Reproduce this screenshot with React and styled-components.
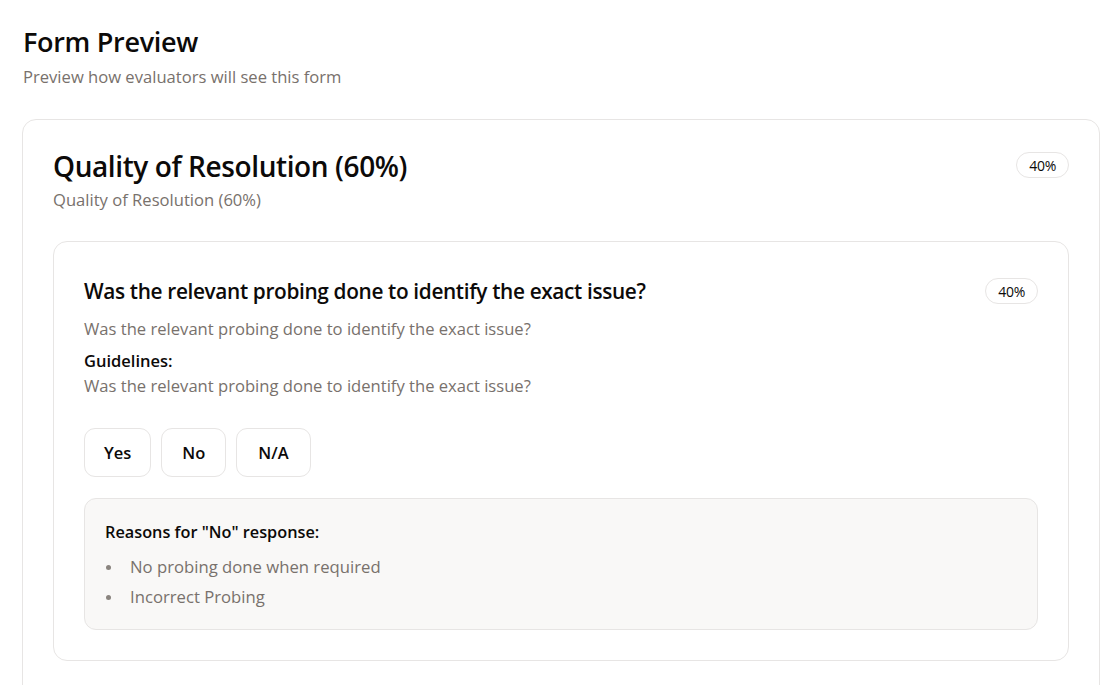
import React from "react";
import styled, { createGlobalStyle } from "styled-components";

const Global = createGlobalStyle`
  html, body { margin: 0; padding: 0; background: #ffffff; }
  body { font-family: "Open Sans", "Noto Sans", sans-serif; color: #0c0a09; }
  * { box-sizing: border-box; }
`;

const Page = styled.div`
  padding: 24px 10px 0 22px;
  height: 685px;
  overflow: hidden;
`;

const Header = styled.header`
  margin-bottom: 30px;
  padding-left: 1px;
`;

const PageTitle = styled.h1`
  margin: 0;
  font-size: 27px;
  font-weight: 600;
  line-height: 36px;
  letter-spacing: -0.3px;
`;

const Muted = styled.p`
  margin: ${(p) => p.$mt || 0}px 0 0;
  font-size: ${(p) => p.$size || 16.6}px;
  line-height: ${(p) => p.$lh || 24}px;
  color: #78716c;
`;

const Card = styled.section`
  border: 1px solid #e7e5e4;
  border-radius: 14px;
  padding: ${(p) => p.$pad || "30px"};
  margin-top: ${(p) => p.$mt || 0}px;
  background: #fff;
  ${(p) => p.$outer && "min-height: 700px;"}
`;

const HeadRow = styled.div`
  display: flex;
  justify-content: space-between;
  align-items: flex-start;
  gap: 16px;
`;

const SectionTitle = styled.h2`
  margin: 0;
  font-size: 28px;
  font-weight: 600;
  line-height: 38px;
  letter-spacing: -0.4px;
`;

const QuestionTitle = styled.h3`
  margin: 0;
  font-size: 20.8px;
  font-weight: 600;
  line-height: 30px;
  letter-spacing: -0.35px;
`;

const Badge = styled.span`
  display: inline-flex;
  align-items: center;
  justify-content: center;
  height: 26px;
  padding: 0 12px;
  border: 1px solid #e7e5e4;
  border-radius: 999px;
  font-size: 14px;
  font-weight: 500;
  margin-top: ${(p) => p.$mt || 0}px;
  letter-spacing: -0.3px;
  flex-shrink: 0;
`;

const Label = styled.div`
  margin-top: 9px;
  font-size: 16.5px;
  font-weight: 600;
  line-height: 22px;
`;

const Options = styled.div`
  display: flex;
  gap: 10px;
  margin-top: 30px;
`;

const OptionButton = styled.button`
  font-family: inherit;
  height: 49px;
  padding: 0 ${(p) => p.$px || 20}px;
  border: 1px solid #e7e5e4;
  border-radius: 11px;
  background: #fff;
  font-size: 16.5px;
  font-weight: 600;
  color: #0c0a09;
  cursor: pointer;
`;

const ReasonBox = styled.div`
  margin-top: 21px;
  background: #f9f8f7;
  border: 1px solid #e7e5e4;
  border-radius: 12px;
  padding: 22px 20px 17px;
`;

const ReasonTitle = styled.div`
  font-size: 16.3px;
  font-weight: 600;
  line-height: 22px;
`;

const ReasonList = styled.ul`
  margin: 9px 0 0;
  padding: 0;
  list-style: none;
  color: #78716c;
  font-size: 16.7px;
  line-height: 30px;
`;

const ReasonItem = styled.li`
  display: flex;
  align-items: center;
  &::before {
    content: "";
    width: 5px;
    height: 5px;
    border-radius: 50%;
    background: #8a847f;
    margin: 0 19px 0 1px;
    flex-shrink: 0;
  }
`;

export default function App() {
  return (
    <>
      <Global />
      <Page>
        <Header>
          <PageTitle>Form Preview</PageTitle>
          <Muted $mt={5}>Preview how evaluators will see this form</Muted>
        </Header>
        <Card $outer $pad="27px 30px">
          <HeadRow>
            <div>
              <SectionTitle>Quality of Resolution (60%)</SectionTitle>
              <Muted $mt={3}>Quality of Resolution (60%)</Muted>
            </div>
            <Badge $mt={5}>40%</Badge>
          </HeadRow>
          <Card $pad="34px 30px 30px" $mt={29}>
            <HeadRow>
              <QuestionTitle>Was the relevant probing done to identify the exact issue?</QuestionTitle>
              <Badge $mt={2}>40%</Badge>
            </HeadRow>
            <Muted $mt={11}>Was the relevant probing done to identify the exact issue?</Muted>
            <Label>Guidelines:</Label>
            <Muted $mt={2}>Was the relevant probing done to identify the exact issue?</Muted>
            <Options>
              <OptionButton $px={19}>Yes</OptionButton>
              <OptionButton $px={20}>No</OptionButton>
              <OptionButton $px={21}>N/A</OptionButton>
            </Options>
            <ReasonBox>
              <ReasonTitle>Reasons for "No" response:</ReasonTitle>
              <ReasonList>
                <ReasonItem>No probing done when required</ReasonItem>
                <ReasonItem>Incorrect Probing</ReasonItem>
              </ReasonList>
            </ReasonBox>
          </Card>
        </Card>
      </Page>
    </>
  );
}
